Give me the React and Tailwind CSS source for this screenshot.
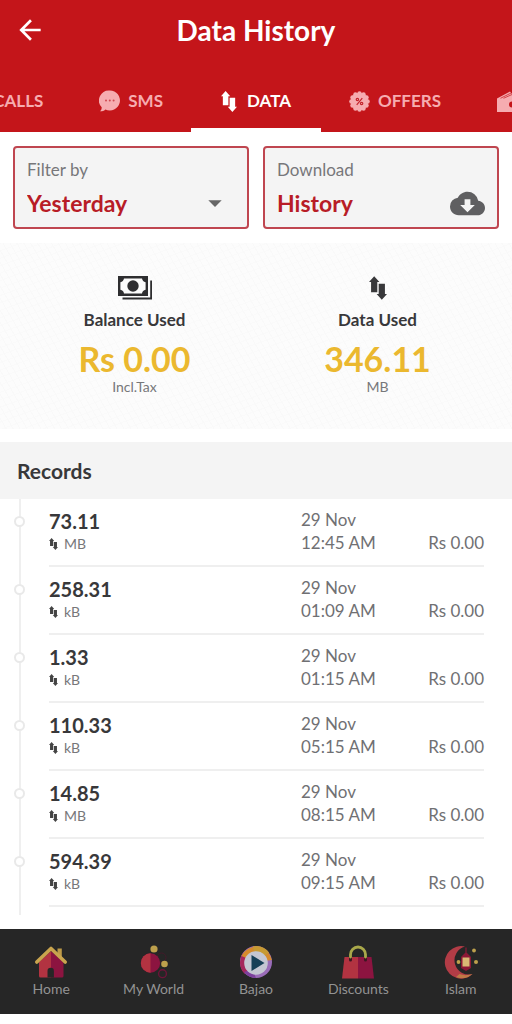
import React from 'react';
import { MdArrowBack, MdCloudDownload, MdArrowDropDown } from 'react-icons/md';

const records = [
  { value: '73.11', unit: 'MB', date: '29 Nov', time: '12:45 AM', cost: 'Rs 0.00' },
  { value: '258.31', unit: 'kB', date: '29 Nov', time: '01:09 AM', cost: 'Rs 0.00' },
  { value: '1.33', unit: 'kB', date: '29 Nov', time: '01:15 AM', cost: 'Rs 0.00' },
  { value: '110.33', unit: 'kB', date: '29 Nov', time: '05:15 AM', cost: 'Rs 0.00' },
  { value: '14.85', unit: 'MB', date: '29 Nov', time: '08:15 AM', cost: 'Rs 0.00' },
  { value: '594.39', unit: 'kB', date: '29 Nov', time: '09:15 AM', cost: 'Rs 0.00' },
];

function UpDown({ className }) {
  return (
    <svg viewBox="0 0 52 68" className={className} fill="currentColor" aria-hidden="true">
      <path d="M15 0 30 17H24V46H6V17H0Z" />
      <path d="M37 68 22 51H28V22H46V51H52Z" />
    </svg>
  );
}

function ChatIcon() {
  return (
    <svg viewBox="0 0 21 22" className="h-[22px] w-[21px]" aria-hidden="true">
      <path d="M11 .5a10 10 0 1 1-4.6 18.9C4.8 20.9 3 21.4 1 21.3c1.1-.9 1.7-2.1 1.7-4A10 10 0 0 1 11 .5Z" fill="#f6acb0" />
      <g fill="#cf4a52">
        <circle cx="7" cy="10.5" r="1" />
        <circle cx="10.8" cy="10.5" r="1" />
        <circle cx="14.6" cy="10.5" r="1" />
      </g>
    </svg>
  );
}

function OfferIcon() {
  return (
    <svg viewBox="-10.5 -10.5 21 21" className="size-[21px]" aria-hidden="true">
      <g fill="#f6acb0">
        <circle r="8.7" />
        <circle cx="8.1" cy="0" r="2.2" />
        <circle cx="7" cy="4.05" r="2.2" />
        <circle cx="4.05" cy="7" r="2.2" />
        <circle cx="0" cy="8.1" r="2.2" />
        <circle cx="-4.05" cy="7" r="2.2" />
        <circle cx="-7" cy="4.05" r="2.2" />
        <circle cx="-8.1" cy="0" r="2.2" />
        <circle cx="-7" cy="-4.05" r="2.2" />
        <circle cx="-4.05" cy="-7" r="2.2" />
        <circle cx="0" cy="-8.1" r="2.2" />
        <circle cx="4.05" cy="-7" r="2.2" />
        <circle cx="7" cy="-4.05" r="2.2" />
      </g>
      <g fill="none" stroke="#c4232b" strokeWidth="1.2">
        <path d="M2.8-3.3-2.8 3.3" />
        <circle cx="-2.1" cy="-2" r="1.2" />
        <circle cx="2.1" cy="2" r="1.2" />
      </g>
    </svg>
  );
}

function WalletIcon() {
  return (
    <svg viewBox="0 0 24 21" className="h-[21px] w-6" aria-hidden="true">
      <path d="M0 7.5 13 .5l4 5H24V21H0Z" fill="#f6acb0" />
      <path d="M3.5 7.3 14.5 1.8M6.5 7.3l9-4" stroke="#c4151a" strokeWidth=".7" />
      <circle cx="15" cy="13.5" r="3" fill="#c4151a" />
    </svg>
  );
}

function CashIcon() {
  return (
    <svg viewBox="0 0 34 24" className="h-6 w-[34px]" aria-hidden="true">
      <path d="M0 0h30v20H0Z" fill="#2e2e30" />
      <path d="M6 2.5h18c.3 2 1.6 3.3 3.6 3.7v7.6c-2 .4-3.3 1.7-3.6 3.7H6c-.3-2-1.6-3.3-3.6-3.7V6.2C4.4 5.8 5.7 4.5 6 2.5Z" fill="#fcfcfc" />
      <circle cx="15" cy="10" r="5.7" fill="#2e2e30" />
      <path d="M4.5 22.5h28.6V4.5" fill="none" stroke="#2e2e30" strokeWidth="1.8" />
    </svg>
  );
}

function HomeIcon() {
  return (
    <svg viewBox="0 0 34 34" className="size-[34px]" aria-hidden="true">
      <path d="M23.5 3.5h4.3v9h-4.3z" fill="#bd9a48" />
      <path d="M5 17 17 6v26.5H6.5A1.5 1.5 0 0 1 5 31Z" fill="#b23341" />
      <path d="M17 6l12.5 11v14a1.5 1.5 0 0 1-1.5 1.5H17Z" fill="#8c1440" />
      <path d="M13.5 32.5V26a3.2 3.2 0 0 1 6.4 0v6.5Z" fill="#262626" />
      <path d="M2.8 17 17 3.5 31.2 17" fill="none" stroke="#c9a44e" strokeWidth="3.6" strokeLinecap="round" strokeLinejoin="round" />
    </svg>
  );
}

function WorldIcon() {
  return (
    <svg viewBox="0 0 34 34" className="size-[34px]" aria-hidden="true">
      <circle cx="24.5" cy="12.5" r="4.5" fill="none" stroke="#421a2a" strokeWidth="1" />
      <circle cx="13.5" cy="18" r="9.7" fill="#8c1440" />
      <path d="M13.5 8.3a9.7 9.7 0 0 0 0 19.4Z" fill="#b23341" />
      <circle cx="17" cy="4" r="3.6" fill="#bda04c" />
      <circle cx="27.5" cy="19" r="3.3" fill="#bda04c" />
      <circle cx="25.5" cy="28.7" r="3.9" fill="none" stroke="#6d1439" strokeWidth="1.4" />
    </svg>
  );
}

function BajaoIcon() {
  return (
    <svg viewBox="0 0 34 34" className="size-[34px]" aria-hidden="true">
      <circle cx="17" cy="17" r="16" fill="#9a6cb8" />
      <path d="M17 17 6 29A16 16 0 0 1 4 8Z" fill="#a5265c" />
      <path d="M17 17 2.5 11A16 16 0 0 1 32.8 15Z" fill="#d58a2c" />
      <path d="M17 17 14 1.3A16 16 0 0 1 30 7.5Z" fill="#c79a33" />
      <path d="M5 27a16 16 0 0 0 12 6l-4-9Z" fill="#7c3f9c" />
      <circle cx="17" cy="18" r="11.8" fill="#c4c6d2" />
      <path d="M12.500 10 25.5 18 12.500 26Z" fill="#163f57" />
    </svg>
  );
}

function BagIcon() {
  return (
    <svg viewBox="0 0 34 34" className="size-[34px]" aria-hidden="true">
      <path d="M3.5 12H17v21.5H1Z" fill="#b23341" />
      <path d="M17 12h13.5L33 33.5H17Z" fill="#8c1440" />
      <path d="M9.5 12v3M24.5 12v3" stroke="#3d1722" strokeWidth="3" strokeLinecap="round" />
      <path d="M9.5 12V9.5a7.5 7.5 0 0 1 15 0V12" fill="none" stroke="#a9a84a" strokeWidth="2.8" strokeLinecap="round" />
    </svg>
  );
}

function IslamIcon() {
  return (
    <svg viewBox="0 0 34 34" className="size-[34px]" aria-hidden="true">
      <path d="M21 1.5A16.3 16.3 0 1 0 28.5 29 13 13 0 1 1 21 1.5Z" fill="#b23c46" />
      <path d="M12 32a16.300 16.300 0 0 0 16.500-3c-5 1.500-9 1.500-13 0Z" fill="#bd7a46" />
      <path d="M17 12 22 7l5 5v11L22 26l-5-3Z" fill="#8c1836" />
      <path d="M18.5 12.5h7v9h-7z" fill="#d9b974" />
      <path d="M22 2.5v5" stroke="#8c1836" strokeWidth="1.2" />
      <g fill="#bda04c">
        <circle cx="30" cy="5.5" r="1.9" />
        <circle cx="32" cy="17" r="2" />
        <circle cx="14.5" cy="17" r="1.9" />
      </g>
    </svg>
  );
}

const navItems = [
  { label: 'Home', Icon: HomeIcon },
  { label: 'My World', Icon: WorldIcon },
  { label: 'Bajao', Icon: BajaoIcon },
  { label: 'Discounts', Icon: BagIcon },
  { label: 'Islam', Icon: IslamIcon },
];

const tab = 'flex h-full flex-none items-center gap-2 px-7 text-[#f6acb0]';

export default function App() {
  return (
    <div className="flex min-h-screen flex-col bg-white pb-[10px] font-['Lato',sans-serif] text-[#38383a]">
      <header className="bg-[#c4151a] text-white">
        <div className="grid h-[60px] grid-cols-[60px_1fr_60px] items-center">
          <button type="button" aria-label="Back" className="flex justify-center">
            <MdArrowBack className="size-8" />
          </button>
          <h1 className="text-center text-[28px] leading-8 font-bold">Data History</h1>
        </div>
        <nav aria-label="History type" className="grid h-[72px] grid-cols-[minmax(0,1fr)_auto_minmax(0,1fr)] overflow-hidden pt-[10px] text-[17px] font-bold">
          <div className="flex justify-end overflow-hidden">
            <a href="#calls" className={tab}>CALLS</a>
            <a href="#sms" className={tab}><ChatIcon />SMS</a>
          </div>
          <a href="#data" aria-current="page" className="flex items-center gap-[10px] border-b-4 border-white px-[30px] pt-1">
            <UpDown className="h-[21px] w-4" />DATA
          </a>
          <div className="flex overflow-hidden">
            <a href="#offers" className={tab}><OfferIcon />OFFERS</a>
            <a href="#wallet" aria-label="Wallet" className={tab}><WalletIcon /></a>
          </div>
        </nav>
      </header>

      <main>
        <section className="grid grid-cols-2 gap-[14px] px-[13px] pt-[14px]">
          <div className="relative flex h-[83px] flex-col rounded border-2 border-[#bf4650] bg-[#f4f4f4] px-3 pt-3">
            <label htmlFor="period" className="text-[17px] leading-5 text-[#77777a]">Filter by</label>
            <select id="period" className="mt-[7px] h-8 w-full appearance-none bg-transparent text-[23px] leading-8 font-bold text-[#b81c26]">
              <option>Yesterday</option>
            </select>
            <MdArrowDropDown className="pointer-events-none absolute right-4 bottom-2 size-8 text-[#666]" />
          </div>
          <button type="button" className="flex h-[83px] flex-col rounded border-2 border-[#bf4650] bg-[#f4f4f4] px-3 pt-3 text-left">
            <span className="text-[17px] leading-5 text-[#77777a]">Download</span>
            <span className="mt-[7px] flex h-8 w-full items-center justify-between text-[23px] leading-8 font-bold text-[#b81c26]">
              History
              <MdCloudDownload className="size-[35px] text-[#5f5f61]" />
            </span>
          </button>
        </section>

        <section className="mt-[14px] grid h-[186px] grid-cols-2 bg-[#fcfcfc] bg-[repeating-linear-gradient(60deg,transparent_0_5px,#f9f9f9_5px_6px),repeating-linear-gradient(-20deg,transparent_0_6px,#fafafa_6px_7px)] px-[13px] pt-[33px]">
          <div className="flex flex-col items-center">
            <CashIcon />
            <h2 className="mt-2 text-[17px] leading-6 font-bold">Balance Used</h2>
            <p className="mt-[7px] text-[34px] leading-10 font-bold text-[#ebb82f]">Rs 0.00</p>
            <p className="text-sm leading-4 text-[#77777a]">Incl.Tax</p>
          </div>
          <div className="flex flex-col items-center">
            <UpDown className="h-6 w-[18px]" />
            <h2 className="mt-2 text-[17px] leading-6 font-bold">Data Used</h2>
            <p className="mt-[7px] text-[34px] leading-10 font-bold text-[#ebb82f]">346.11</p>
            <p className="text-sm leading-4 text-[#77777a]">MB</p>
          </div>
        </section>

        <section>
          <h2 className="mt-[13px] bg-[#f4f4f4] px-[17px] text-[21px] leading-[57px] font-bold">Records</h2>
          <ul className="mr-7 ml-[19px] border-l-2 border-[#efefef] pb-2">
            {records.map((r) => (
              <li key={r.time} className="flex h-[68px] items-start">
                <span className="mt-[17px] -ml-[7px] size-[11px] flex-none rounded-full border-2 border-[#e9e9e9] bg-white" />
                <div className="ml-6 flex h-[68px] flex-1 border-b-2 border-[#efefef]">
                  <div className="flex-1 pt-[10px]">
                    <p className="text-xl leading-[25px] font-bold">{r.value}</p>
                    <p className="flex items-center gap-[6px] text-sm leading-5 text-[#77777a]">
                      <UpDown className="h-3 w-[9px] text-[#444]" />{r.unit}
                    </p>
                  </div>
                  <p className="w-[110px] pt-[9px] text-[17px] leading-[23px] text-[#707073]">{r.date}<br />{r.time}</p>
                  <p className="w-[73px] pt-8 text-right text-[17px] leading-[23px] text-[#707073]">{r.cost}</p>
                </div>
              </li>
            ))}
          </ul>
        </section>
      </main>

      <nav aria-label="Main" className="mt-auto grid h-[85px] grid-cols-5 bg-[#262626]">
        {navItems.map(({ label, Icon }) => (
          <a key={label} href="#" className="flex flex-col items-center pt-4 text-sm leading-5 text-[#939393]">
            <Icon />
            {label}
          </a>
        ))}
      </nav>
    </div>
  );
}
